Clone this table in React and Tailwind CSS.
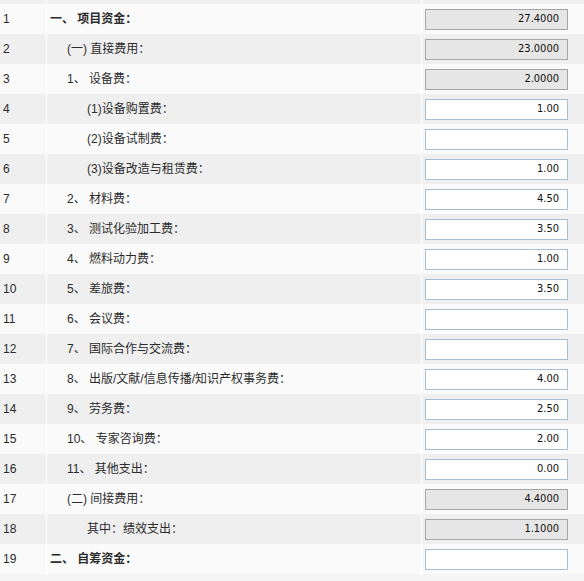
import React from "react";

const rows = [
  { n: 1, label: "一、 项目资金：", lv: 1, bold: true, v: "27.4000", ro: true },
  { n: 2, label: "(一) 直接费用：", lv: 2, v: "23.0000", ro: true },
  { n: 3, label: "1、 设备费：", lv: 2, v: "2.0000", ro: true },
  { n: 4, label: "(1)设备购置费：", lv: 3, v: "1.00" },
  { n: 5, label: "(2)设备试制费：", lv: 3, v: "" },
  { n: 6, label: "(3)设备改造与租赁费：", lv: 3, v: "1.00" },
  { n: 7, label: "2、 材料费：", lv: 2, v: "4.50" },
  { n: 8, label: "3、 测试化验加工费：", lv: 2, v: "3.50" },
  { n: 9, label: "4、 燃料动力费：", lv: 2, v: "1.00" },
  { n: 10, label: "5、 差旅费：", lv: 2, v: "3.50" },
  { n: 11, label: "6、 会议费：", lv: 2, v: "" },
  { n: 12, label: "7、 国际合作与交流费：", lv: 2, v: "" },
  { n: 13, label: "8、 出版/文献/信息传播/知识产权事务费：", lv: 2, v: "4.00" },
  { n: 14, label: "9、 劳务费：", lv: 2, v: "2.50" },
  { n: 15, label: "10、 专家咨询费：", lv: 2, v: "2.00" },
  { n: 16, label: "11、 其他支出：", lv: 2, v: "0.00" },
  { n: 17, label: "(二) 间接费用：", lv: 2, v: "4.4000", ro: true },
  { n: 18, label: "其中：绩效支出：", lv: 3, v: "1.1000", ro: true },
  { n: 19, label: "二、 自筹资金：", lv: 1, bold: true, v: "" },
];

const font = { fontFamily: '"Liberation Sans", "Noto Sans CJK SC", sans-serif' };

function Row({ r }) {
  const bg = r.n % 2 === 1 ? "bg-[#fafafa]" : "bg-[#efefef]";
  const pad = r.lv === 1 ? "pl-[3px]" : r.lv === 2 ? "pl-[20px]" : "pl-[40px]";
  return (
    <div className="flex h-[30px] gap-px">
      <div className={`w-[46px] ${bg} flex items-center pl-[3px] text-[12px] text-[#2b2b2b]`}>{r.n}</div>
      <div
        className={`w-[374px] ${bg} flex items-center ${pad} text-[12px] text-[#2b2b2b] whitespace-pre ${r.bold ? "font-bold" : ""}`}
      >
        {r.label}
      </div>
      <div className={`flex-1 ${bg} flex items-center pl-[3px]`}>
        <div
          className={`w-[143px] h-[21px] border flex items-center justify-end pr-[8px] text-[11px] text-[#111] ${
            r.ro ? "bg-[#e6e6e6] border-[#a6a6a6]" : "bg-white border-[#a9bdd4]"
          }`}
          style={{ fontFamily: '"DejaVu Sans Condensed", "DejaVu Sans", sans-serif' }}
        >
          {r.v}
        </div>
      </div>
    </div>
  );
}

export default function App() {
  return (
    <div className="w-[584px] h-[581px] overflow-hidden bg-white" style={font}>
      <div className="flex h-[4px] gap-px">
        <div className="w-[46px] bg-[#efefef]" />
        <div className="w-[374px] bg-[#efefef]" />
        <div className="flex-1 bg-[#efefef]" />
      </div>
      {rows.map((r) => (
        <Row key={r.n} r={r} />
      ))}
      <div className="h-[7px] bg-[#f5f5f5]" />
    </div>
  );
}
